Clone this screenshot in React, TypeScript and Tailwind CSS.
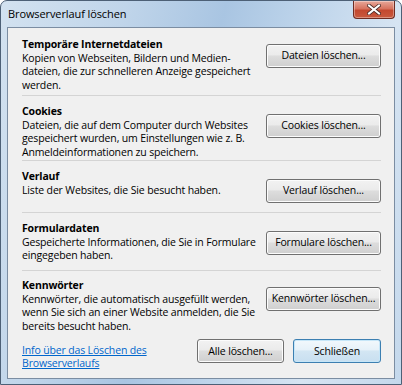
import { ReactNode } from "react";

const font = { fontFamily: '"Open Sans", "Noto Sans", sans-serif' };

function VistaButton({ children, isDefault, width }: { children: ReactNode; isDefault?: boolean; width: string }) {
    return (
        <button
            className={`${width} h-[24px] shrink-0 rounded-[3px] border text-[10.5px] tracking-[-0.15px] text-black leading-none whitespace-nowrap ${
                isDefault
                    ? "border-[#3c7fb1] bg-[linear-gradient(#f2f8fc_0%,#e6f1f9_45%,#d3e6f3_50%,#c8dff0_100%)] shadow-[inset_0_0_0_1px_#c6e6f8]"
                    : "border-[#707070] bg-[linear-gradient(#f2f2f2_0%,#ebebeb_45%,#dddddd_50%,#cfcfcf_100%)] shadow-[inset_0_0_0_1px_#fcfcfc]"
            }`}
        >
            {children}
        </button>
    );
}

interface SectionProps {
    title: string;
    pt: string;
    height: string;
    button: string;
    btnShift?: string;
    children: ReactNode;
}

function Section({ title, pt, height, button, btnShift = "-mt-[5px]", children }: SectionProps) {
    return (
        <div className={`${pt} ${height} border-b border-[#d4d4d4]`}>
            <div className="font-bold">{title}</div>
            <div className="flex items-start">
                <p className="flex-1 whitespace-nowrap">{children}</p>
                <div className={btnShift}>
                    <VistaButton width="w-[115px]">{button}</VistaButton>
                </div>
            </div>
        </div>
    );
}

export default function App() {
    return (
        <div
            className="w-[402px] h-[385px] flex flex-col rounded-t-[7px] border border-[#4d6076] bg-[linear-gradient(105deg,#d3e2f0_0%,#c0d5ea_25%,#a9c5e2_45%,#bcd3ea_60%,#d6e4f2_80%,#c4d8ec_100%)] overflow-hidden"
            style={font}
        >
            {/* title bar */}
            <div className="h-[26px] flex items-start shrink-0">
                <div className="pl-[7px] pt-[6px] text-[11px] tracking-[-0.1px] text-black leading-[14px]">Browserverlauf löschen</div>
                <div className="ml-auto mr-[6px] w-[42px] h-[18px] rounded-b-[4px] border border-t-0 border-[#6e2c22] bg-[linear-gradient(#e7a89a_0%,#d7735f_45%,#c3482f_55%,#c95a3e_100%)] shadow-[inset_0_0_0_1px_rgba(255,255,255,0.35)] flex items-center justify-center">
                    <svg width="14" height="11" viewBox="0 0 14 11">
                        <path d="M2 1.5 L12 9.5 M12 1.5 L2 9.5" stroke="#4a2a26" strokeWidth="3.6" strokeLinecap="square" />
                        <path d="M2 1.5 L12 9.5 M12 1.5 L2 9.5" stroke="#ffffff" strokeWidth="2" strokeLinecap="square" />
                    </svg>
                </div>
            </div>

            {/* client area */}
            <div className="flex-1 mx-[6px] mb-[5px] border border-[#7b8da2] bg-[#f0f0f0] pl-[14px] pr-[13px] text-[10.5px] tracking-[-0.15px] leading-[13.5px] text-black">
                <Section title="Temporäre Internetdateien" pt="pt-[10px]" height="h-[68px]" button="Dateien löschen..." btnShift="-mt-[8px]">
                    Kopien von Webseiten, Bildern und Medien-
                    <br />
                    dateien, die zur schnelleren Anzeige gespeichert
                    <br />
                    werden.
                </Section>
                <Section title="Cookies" pt="pt-[9px]" height="h-[65px]" button="Cookies löschen...">
                    Dateien, die auf dem Computer durch Websites
                    <br />
                    gespeichert wurden, um Einstellungen wie z. B.
                    <br />
                    Anmeldeinformationen zu speichern.
                </Section>
                <Section title="Verlauf" pt="pt-[9px]" height="h-[52px]" button="Verlauf löschen...">
                    Liste der Websites, die Sie besucht haben.
                </Section>
                <Section title="Formulardaten" pt="pt-[9px]" height="h-[58px]" button="Formulare löschen...">
                    Gespeicherte Informationen, die Sie in Formulare
                    <br />
                    eingegeben haben.
                </Section>

                <div className="pt-[8px]">
                    <div className="font-bold">Kennwörter</div>
                    <div className="flex items-start">
                        <p className="flex-1 whitespace-nowrap">
                            Kennwörter, die automatisch ausgefüllt werden,
                            <br />
                            wenn Sie sich an einer Website anmelden, die Sie
                            <br />
                            bereits besucht haben.
                        </p>
                        <div className="-mt-[6px]">
                            <VistaButton width="w-[115px]">Kennwörter löschen...</VistaButton>
                        </div>
                    </div>
                </div>

                {/* footer */}
                <div className="flex items-start mt-[6px]">
                    <a className="flex-1 pt-[5px] text-[#0066cc] underline leading-[13px] whitespace-nowrap">
                        Info über das Löschen des
                        <br />
                        Browserverlaufs
                    </a>
                    <div className="flex gap-[9px]">
                        <VistaButton width="w-[87px]">Alle löschen...</VistaButton>
                        <VistaButton width="w-[88px]" isDefault>
                            Schließen
                        </VistaButton>
                    </div>
                </div>
            </div>
        </div>
    );
}
